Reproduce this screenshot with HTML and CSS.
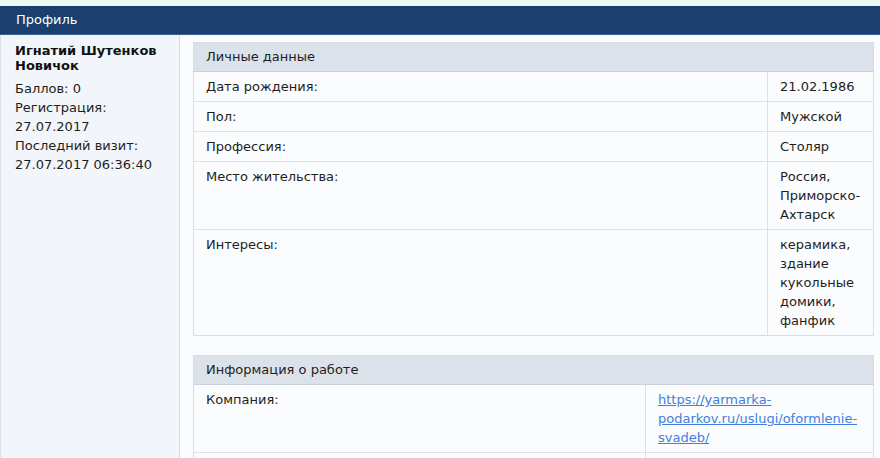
FILE: index.html
```html
<!DOCTYPE html>
<html lang="ru">
<head>
    <meta charset="UTF-8">
    <meta name="viewport" content="width=device-width, initial-scale=1.0">
    <title>Профиль</title>
    <link rel="stylesheet" href="styles.css">
</head>
<body>
    <div class="panel">
        <div class="panel-head">Профиль</div>
        <div class="panel-body">
            <div class="sidebar">
                <div class="user-name">Игнатий Шутенков Новичок</div>
                <div class="user-info">
                    <div>Баллов: 0</div>
                    <div>Регистрация:</div>
                    <div>27.07.2017</div>
                    <div>Последний визит:</div>
                    <div>27.07.2017 06:36:40</div>
                </div>
            </div>

            <div class="content">
                <table class="info-table">
                    <colgroup>
                        <col>
                        <col class="col-short">
                    </colgroup>
                    <thead>
                        <tr><th colspan="2">Личные данные</th></tr>
                    </thead>
                    <tbody>
                        <tr><td>Дата рождения:</td><td>21.02.1986</td></tr>
                        <tr><td>Пол:</td><td>Мужской</td></tr>
                        <tr><td>Профессия:</td><td>Столяр</td></tr>
                        <tr><td>Место жительства:</td><td>Россия, Приморско-Ахтарск</td></tr>
                        <tr><td>Интересы:</td><td>керамика, здание кукольные домики, фанфик</td></tr>
                    </tbody>
                </table>

                <table class="info-table">
                    <colgroup>
                        <col>
                        <col class="col-wide">
                    </colgroup>
                    <thead>
                        <tr><th colspan="2">Информация о работе</th></tr>
                    </thead>
                    <tbody>
                        <tr>
                            <td>Компания:</td>
                            <td><a href="#">https://yarmarka-podarkov.ru/uslugi/oformlenie-svadeb/</a></td>
                        </tr>
                        <tr><td>&nbsp;</td><td>&nbsp;</td></tr>
                    </tbody>
                </table>
            </div>
        </div>
    </div>
</body>
</html>
```

FILE: styles.css
```css
* {
    box-sizing: border-box;
}

body {
    margin: 0;
    padding-top: 6px;
    background-color: #eef8f5;
    font-family: 'DejaVu Sans', Verdana, sans-serif;
    font-size: 13px;
    color: #1e1e1e;
}

.panel-head {
    height: 29px;
    padding: 0 16px;
    line-height: 28px;
    background-color: #1b3f6e;
    border-bottom: 1px solid #3c6492;
    color: #fff;
}

.panel-body {
    display: flex;
    min-height: 430px;
}

.sidebar {
    width: 180px;
    flex-shrink: 0;
    padding: 8px 12px 0 14px;
    background-color: #f2f6fa;
    border-left: 1px solid #d9e0e8;
    border-right: 1px solid #d6dde6;
}

.user-name {
    font-weight: bold;
    line-height: 15px;
    color: #111;
    margin-bottom: 6px;
}

.user-info {
    line-height: 19px;
}

.content {
    flex: 1;
    padding: 7px 6px 0 13px;
    background-color: #fbfcfe;
}

.info-table {
    width: 100%;
    table-layout: fixed;
    border-collapse: collapse;
    border: 1px solid #d6dde5;
    margin-bottom: 19px;
    background-color: #fbfcfe;
}

.col-short {
    width: 106px;
}

.col-wide {
    width: 228px;
}

.info-table th,
.info-table td {
    padding: 5px 12px;
    line-height: 19px;
    text-align: left;
    vertical-align: top;
    font-weight: normal;
}

.info-table th {
    padding-top: 4px;
    background-color: #dce2e9;
    border-bottom: 1px solid #c9d1db;
}

.info-table td {
    border-top: 1px solid #dbe1e8;
}

.info-table td + td {
    border-left: 1px solid #dbe1e8;
}

.info-table a {
    color: #4180dc;
    text-decoration: underline;
}
```
